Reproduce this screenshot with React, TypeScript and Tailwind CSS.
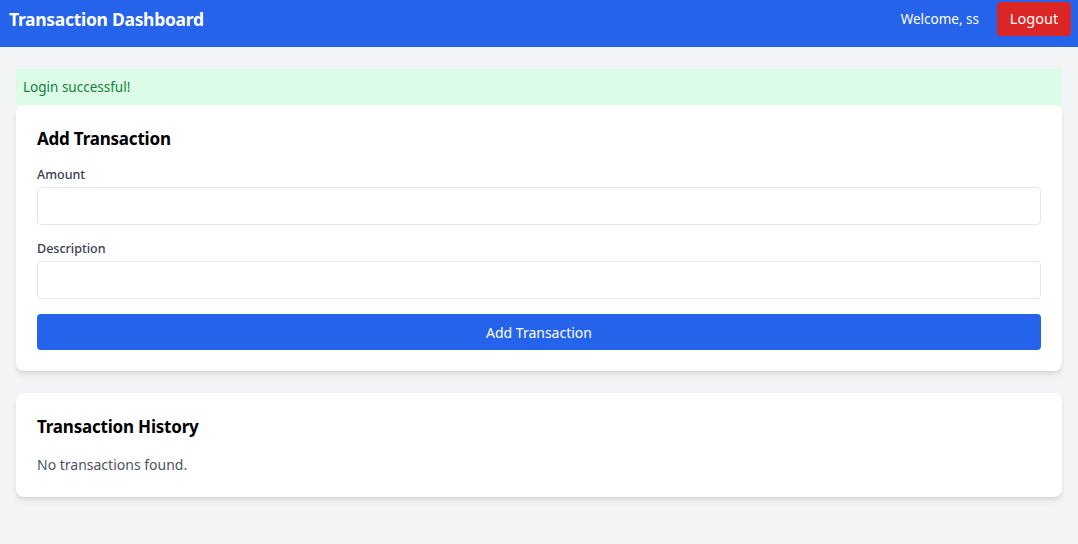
import React, { useState } from 'react';

// Dashboard with a login notice, add form and an (empty) history list
const App: React.FC = () => {
  const [amount, setAmount] = useState('');
  const [description, setDescription] = useState('');

  return (
    <div className="min-h-[544px] bg-[#f3f4f6] font-['Noto_Sans','Open_Sans',sans-serif]">
      {/* Top bar */}
      <header className="bg-[#2563eb] h-[47px] flex items-start justify-between pl-[9px] pr-[7px] pt-[2px]">
        <h1 className="text-white font-bold text-[17.5px] leading-[34px] tracking-[-0.3px]">Transaction Dashboard</h1>
        <div className="flex items-center h-[34px]">
          <span className="text-white text-[13.5px] mr-[18px]">Welcome, ss</span>
          <button className="bg-[#dc2626] text-white text-[14.5px] h-[34px] w-[74px] rounded">Logout</button>
        </div>
      </header>

      <main className="px-4 pt-[22px] pb-10">
        <div className="bg-[#dcfce7] text-[#15803d] text-[13.5px] leading-5 px-[7px] py-2">Login successful!</div>

        {/* Add form */}
        <section className="bg-white rounded-lg shadow-md px-[21px] pt-5 pb-[21px]">
          <h2 className="text-[17px] leading-7 font-bold text-black mb-3 tracking-[-0.2px]">Add Transaction</h2>
          <label className="block text-[12.5px] leading-5 font-medium text-[#374151] mb-[2px]">Amount</label>
          <input
            value={amount}
            onChange={(e) => setAmount(e.target.value)}
            className="block w-full h-[38px] border border-[#e5e7eb] rounded px-3 text-sm mb-[14px]"
          />
          <label className="block text-[12.5px] leading-5 font-medium text-[#374151] mb-[2px]">Description</label>
          <input
            value={description}
            onChange={(e) => setDescription(e.target.value)}
            className="block w-full h-[38px] border border-[#e5e7eb] rounded px-3 text-sm mb-[15px]"
          />
          <button className="w-full h-9 bg-[#2563eb] text-white text-[14px] rounded">Add Transaction</button>
        </section>

        {/* History */}
        <section className="bg-white rounded-lg shadow-md px-[21px] py-5 mt-[22px]">
          <h2 className="text-[17px] leading-7 font-bold text-black mb-3 tracking-[-0.2px]">Transaction History</h2>
          <p className="text-[#4b5563] text-[14px] leading-6">No transactions found.</p>
        </section>
      </main>
    </div>
  );
};

export default App;
